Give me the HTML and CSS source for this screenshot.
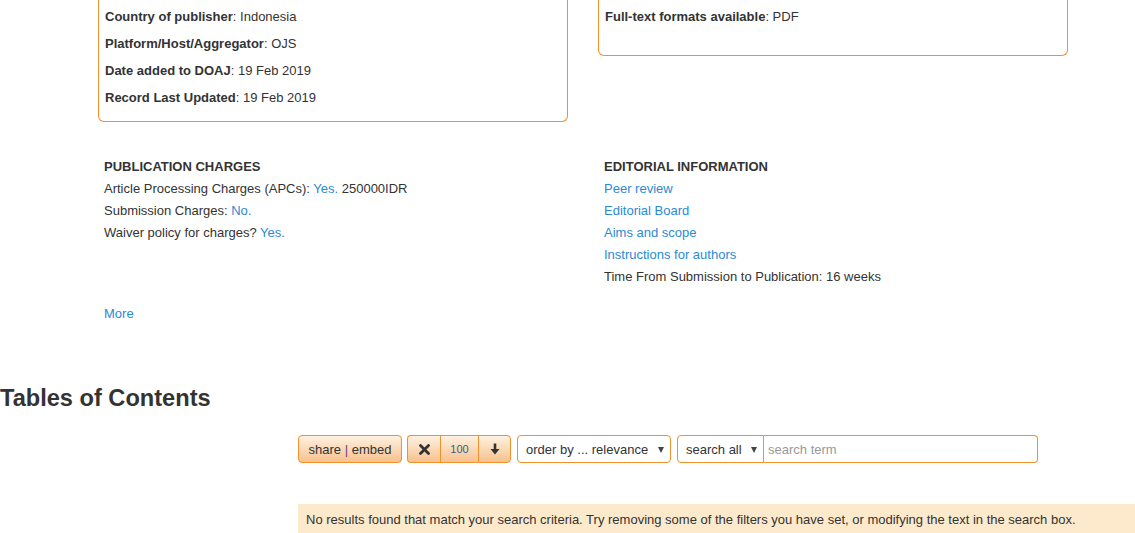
FILE: index.html
```html
<!DOCTYPE html>
<html lang="en">
<head>
  <meta charset="UTF-8">
  <title>Journal record</title>
  <link rel="stylesheet" href="styles.css">
</head>
<body>

  <div class="container">
    <div class="row top-row">
      <div class="col">
        <div class="box box-left">
          <p><b>Country of publisher</b>: Indonesia</p>
          <p><b>Platform/Host/Aggregator</b>: OJS</p>
          <p><b>Date added to DOAJ</b>: 19 Feb 2019</p>
          <p><b>Record Last Updated</b>: 19 Feb 2019</p>
        </div>
      </div>
      <div class="col">
        <div class="box box-right">
          <p><b>Full-text formats available</b>: PDF</p>
        </div>
      </div>
    </div>

    <div class="row info-row">
      <div class="col section">
        <h4>Publication Charges</h4>
        <p>Article Processing Charges (APCs): <a href="#">Yes.</a> 250000IDR</p>
        <p>Submission Charges: <a href="#">No.</a></p>
        <p>Waiver policy for charges? <a href="#">Yes.</a></p>
      </div>
      <div class="col section">
        <h4>Editorial Information</h4>
        <p><a href="#">Peer review</a></p>
        <p><a href="#">Editorial Board</a></p>
        <p><a href="#">Aims and scope</a></p>
        <p><a href="#">Instructions for authors</a></p>
        <p>Time From Submission to Publication: 16 weeks</p>
      </div>
    </div>

    <a class="more" href="#">More</a>
  </div>

  <h2 class="toc-title">Tables of Contents</h2>

  <div class="toc">
    <div class="toolbar">
      <button class="btn share">share <span class="pipe">|</span> embed</button>
      <div class="btn-group">
        <button class="btn cell cell-x">
          <svg width="11" height="11" viewBox="0 0 11 11"><path d="M1.5 1.5 L9.5 9.5 M9.5 1.5 L1.5 9.5" stroke="#333" stroke-width="2.8" stroke-linecap="round"/></svg>
        </button>
        <button class="btn cell cell-num">100</button>
        <button class="btn cell cell-down">
          <svg width="10" height="12" viewBox="0 0 10 12"><path d="M5 0.5 V7" stroke="#333" stroke-width="2.6"/><path d="M0.5 6 H9.5 L5 11.5 Z" fill="#333"/></svg>
        </button>
      </div>
      <div class="select order">order by ... relevance<span class="caret"></span></div>
      <div class="search">
        <div class="select search-field">search all<span class="caret"></span></div>
        <input class="search-input" type="text" placeholder="search term">
      </div>
    </div>

    <div class="no-results">No results found that match your search criteria. Try removing some of the filters you have set, or modifying the text in the search box.</div>
  </div>

</body>
</html>
```

FILE: styles.css
```css
html, body {
  margin: 0px;
  padding: 0px;
  background: #fff;
}
body {
  font-family: "Liberation Sans", Arial, sans-serif;
  font-size: 13px;
  color: #333;
}
a {
  color: #2a8ad4;
  text-decoration: none;
}
p {
  margin: 0;
}
.container {
  width: 970px;
  margin-left: 98px;
}
.row {
  display: flex;
  gap: 30px;
  align-items: flex-start;
}
.col {
  width: 470px;
}
.box {
  border: 1px solid #f0912c;
  border-top: 0;
  border-radius: 0 0 6px 6px;
  padding: 3px 6px 10px;
}
.box p {
  line-height: 27px;
}
.box b {
  font-weight: bold;
}
.box-right {
  padding-bottom: 25px;
}
.info-row {
  margin-top: 34px;
}
.section {
  padding: 0 6px;
  box-sizing: border-box;
}
.section h4 {
  margin: 0;
  font-size: 13px;
  font-weight: bold;
  text-transform: uppercase;
  line-height: 22px;
}
.section p {
  line-height: 22px;
}
.more {
  display: inline-block;
  margin: 15px 0 0 6px;
  line-height: 22px;
}
.toc-title {
  margin: 60px 0 0;
  font-size: 23.6px;
  line-height: 26px;
  font-weight: bold;
  color: #333;
}
.toc {
  margin-left: 298px;
  margin-top: 24px;
}
.toolbar {
  display: flex;
  height: 28px;
}
.btn {
  font-family: inherit;
  font-size: 13px;
  color: #333;
  height: 28px;
  border: 1px solid #f0912c;
  border-radius: 4px;
  background: linear-gradient(#fff1e2, #f7c18c);
  padding: 0;
  margin: 0;
  display: flex;
  align-items: center;
  justify-content: center;
  box-sizing: border-box;
}
.share {
  width: 104px;
  white-space: pre;
}
.pipe {
  color: #7a3b8c;
}
.btn-group {
  display: flex;
  margin-left: 5px;
}
.cell {
  border-radius: 0;
  border-right: 0;
}
.cell-x {
  width: 33px;
  border-radius: 4px 0 0 4px;
}
.cell-num {
  width: 38px;
  font-size: 11px;
  color: #2d5f8c;
}
.cell-down {
  width: 33px;
  border-right: 1px solid #f0912c;
  border-radius: 0 4px 4px 0;
}
.select {
  height: 28px;
  box-sizing: border-box;
  border: 1px solid #f0912c;
  border-radius: 4px;
  background: #fff;
  display: flex;
  align-items: center;
  padding-left: 8px;
  position: relative;
  color: #333;
}
.caret {
  position: absolute;
  right: 6px;
  top: 11px;
  border-left: 3px solid transparent;
  border-right: 3px solid transparent;
  border-top: 6px solid #444;
}
.order {
  width: 154px;
  margin-left: 6px;
}
.search {
  display: flex;
  margin-left: 6px;
  width: 361px;
  height: 28px;
}
.search-field {
  width: 87px;
  border-radius: 4px 0 0 4px;
}
.search-input {
  flex: 1;
  height: 28px;
  box-sizing: border-box;
  border: 1px solid #f0912c;
  border-left: 0;
  border-radius: 0 4px 4px 0;
  font-family: inherit;
  font-size: 13px;
  padding: 0 4px;
  margin: 0;
  outline: none;
}
.search-input::placeholder {
  color: #999;
}
.no-results {
  margin-top: 41px;
  background: #fdeacc;
  padding: 8px 8px 8px;
  font-size: 13px;
  line-height: 16px;
  color: #333;
}
```
